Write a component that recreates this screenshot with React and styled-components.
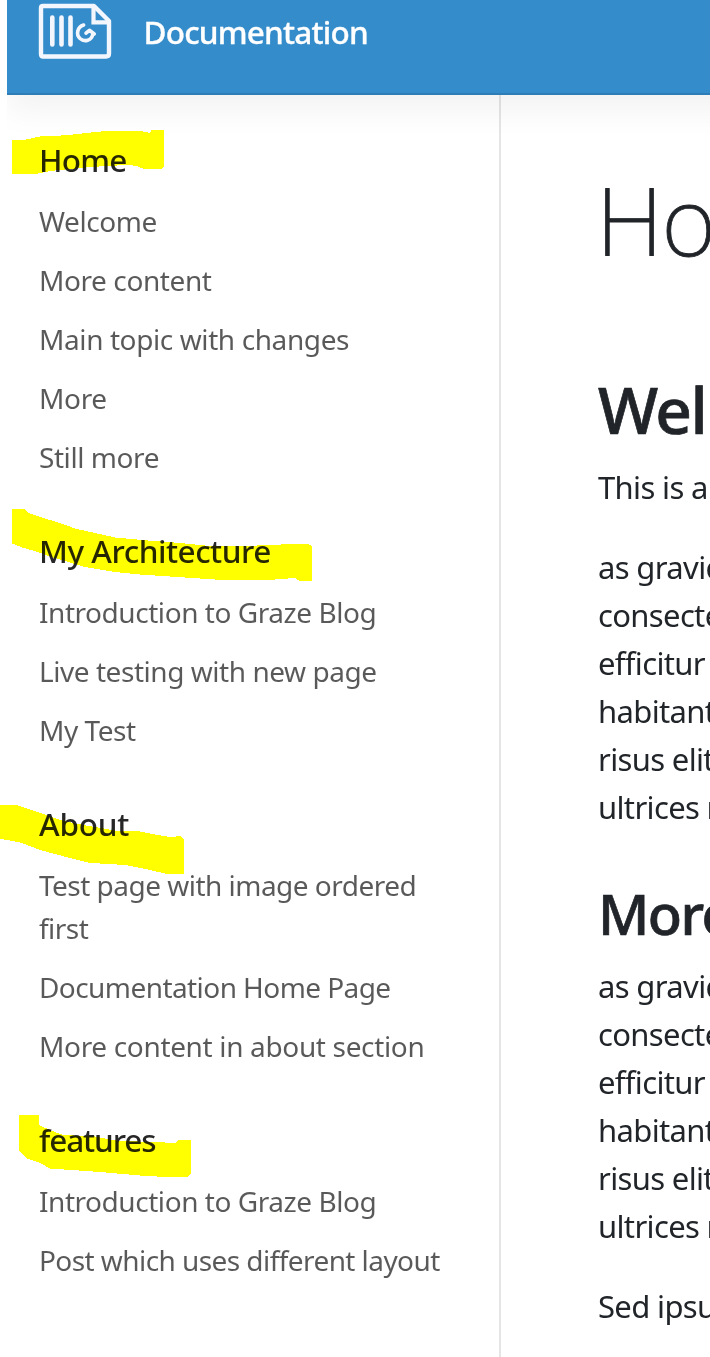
import React from "react";
import styled, { createGlobalStyle } from "styled-components";

const GlobalStyle = createGlobalStyle`
  *, *::before, *::after { box-sizing: border-box; }
  html, body { margin: 0; background: #fff; overflow: hidden; }
  body {
    color: #212529;
    font-family: "Noto Sans", "Open Sans", sans-serif;
    font-size: 31px;
    line-height: 48px;
  }
  h1, h2, p, ul { margin: 0; padding: 0; }
`;

const Screen = styled.div`
  position: relative;
  width: 710px;
  height: 1357px;
  overflow: hidden;
`;

const Page = styled.div`
  display: flex;
  flex-direction: column;
  height: 100%;
  margin-left: 7px;
  overflow: hidden;
`;

const Navbar = styled.header`
  position: relative;
  z-index: 1;
  display: flex;
  align-items: center;
  flex: none;
  gap: 31.5px;
  height: 95px;
  margin-right: -60px;
  padding: 0 0 32px 31px;
  background: #348ccb;
  box-shadow: 0 16px 32px rgba(0, 0, 0, 0.05), inset 0 -2px 0 rgba(0, 0, 0, 0.1);
`;

const Brand = styled.span`
  color: #fff;
  font-size: 31.5px;
  font-weight: 500;
  letter-spacing: -0.8px;
  -webkit-text-stroke: 0.3px currentColor;
`;

const Columns = styled.div`
  display: flex;
  flex: 1;
  min-height: 0;
`;

const Sidebar = styled.nav`
  flex: none;
  display: flex;
  flex-direction: column;
  gap: 41px;
  width: 494px;
  padding: 41px 32px 0 32px;
  border-right: 2px solid #e5e5e5;
`;

const GroupTitle = styled.h2`
  margin-bottom: 8px;
  color: rgba(0, 0, 0, 0.85);
  font-size: 31.5px;
  font-weight: 500;
  line-height: 48px;
  letter-spacing: ${(p) => p.$track}px;
`;

const LinkList = styled.ul`
  margin-bottom: -1px;
  list-style: none;
`;

const LinkItem = styled.li`
  padding: 8px 0;
  color: rgba(0, 0, 0, 0.65);
  font-size: 28px;
  line-height: 43px;
  letter-spacing: ${(p) => p.$track}px;
`;

const Content = styled.main`
  flex: 1;
  min-width: 0;
  padding: 68px 0 0 97px;
  white-space: nowrap;
  overflow: hidden;
`;

const PageTitle = styled.h1`
  margin-left: -2px;
  font-size: 94px;
  font-weight: 200;
  line-height: 115px;
  letter-spacing: -1.5px;
  -webkit-text-stroke: 0.8px currentColor;
`;

const SectionTitle = styled.h2`
  margin: ${(p) => p.$margin};
  font-size: ${(p) => p.$size}px;
  font-weight: 500;
  line-height: 1.2;
  letter-spacing: -1.6px;
  -webkit-text-stroke: 0.7px currentColor;
`;

const Paragraph = styled.p`
  margin-bottom: 32px;
  letter-spacing: -0.65px;
`;

const Line = styled.span`
  display: block;
`;

const Marker = styled.svg`
  position: absolute;
  inset: 0;
  z-index: 2;
  mix-blend-mode: multiply;
  pointer-events: none;
`;

const groups = [
  {
    title: "Home",
    track: -0.8,
    links: [
      ["Welcome", -0.42],
      ["More content", -0.41],
      ["Main topic with changes", -0.4],
      ["More", -0.35],
      ["Still more", -0.43],
    ],
  },
  {
    title: "My Architecture",
    track: -0.48,
    links: [
      ["Introduction to Graze Blog", -0.45],
      ["Live testing with new page", -0.45],
      ["My Test", -0.45],
    ],
  },
  {
    title: "About",
    track: -0.2,
    links: [
      ["Test page with image ordered first", -0.52],
      ["Documentation Home Page", -0.57],
      ["More content in about section", -0.34],
    ],
  },
  {
    title: "features",
    track: -1.1,
    links: [
      ["Introduction to Graze Blog", -0.45],
      ["Post which uses different layout", -0.57],
    ],
  },
];

const lorem = ["as gravid", "consecte", "efficitur", "habitant", "risus elit", "ultrices n"];

const strokes = [
  "12,140 26,139.5 40,136.5 53,136 68,135 86,133 106,131 141,131 150,133 151.5,130 164,130 164,166 161,169 144,169 137,166 128,165 105,166 80,168 50,171 35,174 12,174",
  "12,509 24,509 28,513 45,518.5 60,523 75,528.5 95,533 115,537.5 148,540.5 180,543 205,545.5 240,546 275,545 294,543.5 308,544 312,546 312,581 300,581 295,578 275,579.5 215,579.5 185,577.5 140,574.5 115,572 85,567 65,561 50,556.5 35,551 22,547.5 12,543.5",
  "0,805 16,805 26,808 39,812.5 60,820 75,823.5 95,827 115,830.5 140,831.5 155,834.5 170,837 181,836 184,840 184,874 167,874 150,870 125,865 100,863.5 88,862.5 70,858 40,850 22,843 8,840 0,839",
  "19,1115 39,1115 39,1125 50,1130 63,1135 95,1136.5 112,1140 120,1141 155,1142 175,1143 178,1140 191,1140 191,1173 188,1177 165,1177 140,1175.5 100,1172 50,1168.5 40,1163 28,1159 19,1151",
];

const Logo = () => (
  <svg width="74" height="57" viewBox="38 3 74 57" fill="none" stroke="#f3f7fd" strokeLinejoin="round" strokeLinecap="round">
    <path d="M43 6H94L109 21V53.5Q109 56.5 106 56.5H43Q41 56.5 41 54V8Q41 6 43 6Z" strokeWidth="4.4" />
    <path d="M93.5 7V22.3H108" strokeWidth="4.2" strokeLinejoin="miter" />
    <path d="M52.3 17.5V44.5M61.5 17.5V44.5M70.5 17.5V44.5" strokeWidth="4.6" />
    <path d="M83.6 25C77.2 27 75.8 34.5 80 38.5C84.5 42.5 91.8 40.5 92.8 34.2M94.3 34L89.4 30.3L86 33.2" strokeWidth="3.6" />
  </svg>
);

export default function App() {
  return (
    <>
      <GlobalStyle />
      <Screen>
        <Page>
          <Navbar>
            <Logo />
            <Brand>Documentation</Brand>
          </Navbar>
          <Columns>
            <Sidebar>
              {groups.map((group) => (
                <section key={group.title}>
                  <GroupTitle $track={group.track}>{group.title}</GroupTitle>
                  <LinkList>
                    {group.links.map(([label, track]) => (
                      <LinkItem key={label} $track={track}>{label}</LinkItem>
                    ))}
                  </LinkList>
                </section>
              ))}
            </Sidebar>
            <Content>
              <PageTitle>Ho</PageTitle>
              <SectionTitle $size={64} $margin="94px 0 14px">Wel</SectionTitle>
              <Paragraph>This is a</Paragraph>
              <Paragraph>{lorem.map((line) => <Line key={line}>{line}</Line>)}</Paragraph>
              <SectionTitle $size={56} $margin="49px 0 15px">More</SectionTitle>
              <Paragraph>{lorem.map((line) => <Line key={line}>{line}</Line>)}</Paragraph>
              <Paragraph>Sed ipsu</Paragraph>
            </Content>
          </Columns>
        </Page>
        <Marker width="710" height="1357" viewBox="0 0 710 1357" fill="#ffff00" shapeRendering="crispEdges">
          {strokes.map((points) => <polygon key={points} points={points} />)}
        </Marker>
      </Screen>
    </>
  );
}
